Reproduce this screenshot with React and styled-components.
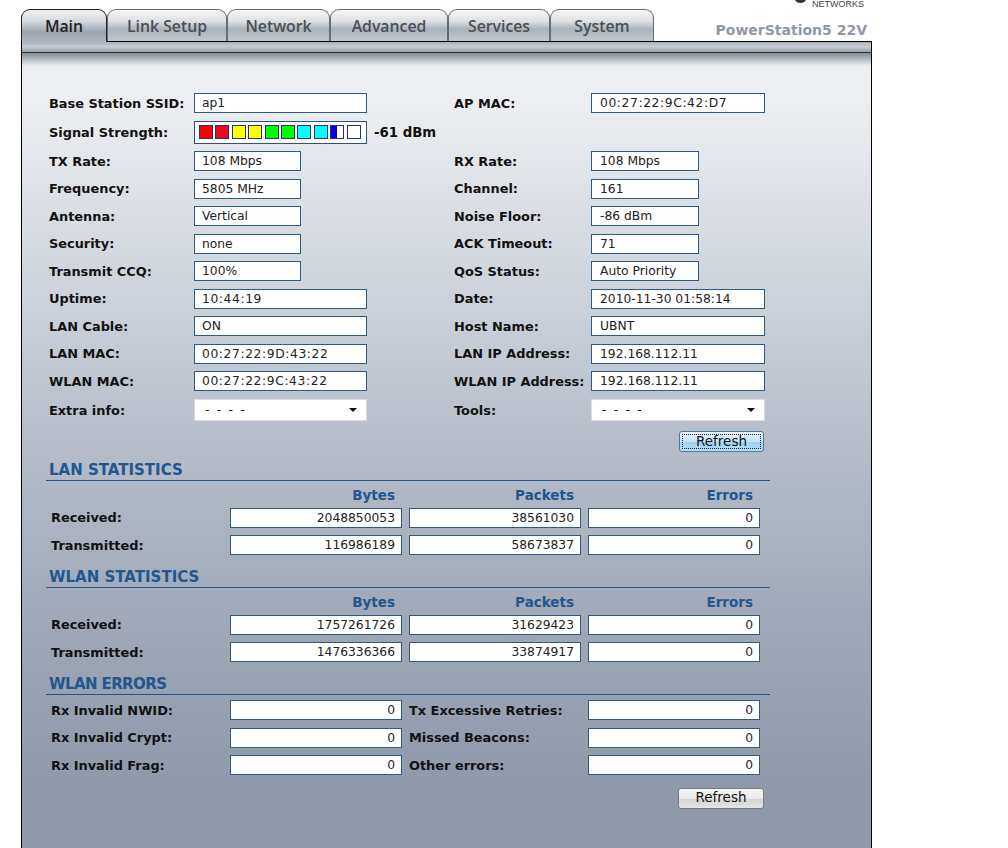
import React from "react";
import styled, { createGlobalStyle } from "styled-components";

const GlobalStyle = createGlobalStyle`
    html, body {
        margin: 0;
        padding: 0;
        height: 848px;
        overflow: hidden;
        background: #fff;
    }
`;

const Page = styled.div`
    position: relative;
    width: 851px;
    height: 848px;
    margin-left: 21px;
    font-family: "DejaVu Sans", Verdana, sans-serif;
    font-size: 12.3px;
    color: #111;
    overflow: hidden;
`;

const Logo = styled.div`
    position: absolute;
    top: -1px;
    right: 8px;
    display: flex;
    gap: 6px;
`;

const LogoMark = styled.svg`
    width: 11px;
    height: 3px;
    margin-top: 1px;
`;

const LogoText = styled.span`
    font-family: "Liberation Sans", Arial, sans-serif;
    font-size: 9px;
    line-height: 11px;
    color: #444;
`;

const Header = styled.div`
    display: flex;
    align-items: flex-end;
    height: 41px;
    padding-top: 9px;
    box-sizing: border-box;
`;

const Tab = styled.div`
    box-sizing: border-box;
    width: ${({ $w }) => $w}px;
    height: ${({ $active }) => ($active ? 33 : 32)}px;
    margin-bottom: ${({ $active }) => ($active ? -1 : 0)}px;
    border: 1px solid ${({ $active }) => ($active ? "#222" : "#666c72")};
    border-bottom: none;
    border-radius: 9px 9px 0 0;
    background: ${({ $active }) =>
        $active
            ? "linear-gradient(#f2f3f5 0%, #d5d9de 35%, #9aa3ae 70%, #aeb6c0 100%)"
            : "linear-gradient(#f4f5f6 0%, #dfe2e5 35%, #aab2bb 62%, #c3c9cf 100%)"};
    text-align: center;
    font-family: "Open Sans", "Trebuchet MS", sans-serif;
    font-size: 15.8px;
    font-weight: 600;
    line-height: 32px;
    white-space: nowrap;
    color: ${({ $active }) => ($active ? "#222" : "#4a4f54")};
    position: relative;
    z-index: ${({ $active }) => ($active ? 2 : 1)};
`;

const Model = styled.div`
    margin-left: auto;
    margin-right: 5px;
    margin-bottom: 3px;
    font-size: 14px;
    font-weight: 700;
    color: #8f98a5;
`;

const Panel = styled.div`
    box-sizing: border-box;
    height: 807px;
    border: 1px solid #000;
    border-bottom: none;
    background: linear-gradient(#eceef1 60px, #bcc3ce 360px, #a2aab9 560px, #8f99aa 745px);
`;

const Strip = styled.div`
    height: 10px;
    background: linear-gradient(#aab2bc, #c6ccd3 45%, #9ba3ad);
    border-bottom: 1px solid #2c3034;
`;

const StripShadow = styled.div`
    height: 13px;
    background: linear-gradient(#868c93, #eceef1);
`;

const Content = styled.div`
    padding: 23.5px 0 0 24px;
    width: 724px;
`;

const InfoGrid = styled.div`
    display: grid;
    grid-template-columns: 405px 1fr;
    grid-template-rows: 27.5px 30.5px repeat(9, 27.5px) 30.5px;
    margin-left: 3px;
`;

const InfoCell = styled.div`
    display: flex;
    align-items: center;
`;

const Label = styled.div`
    width: ${({ $w }) => $w}px;
    flex: none;
    font-size: 12.9px;
    font-weight: 700;
    white-space: nowrap;
`;

const Field = styled.div`
    box-sizing: border-box;
    width: ${({ $w }) => $w}px;
    height: 20px;
    flex: none;
    padding: 0 6px 0 ${({ $pad }) => $pad || 7}px;
    border: 1px solid #2d5a86;
    background: #fff;
    color: #222;
    line-height: 19px;
    letter-spacing: ${({ $mac }) => ($mac ? 0.6 : 0)}px;
    text-align: ${({ $right }) => ($right ? "right" : "left")};
    white-space: nowrap;
    overflow: hidden;
`;

const SignalBox = styled.div`
    box-sizing: border-box;
    width: 173px;
    height: 23px;
    flex: none;
    display: flex;
    align-items: center;
    gap: 2.4px;
    padding-left: 4px;
    border: 1px solid #2d4f86;
    background: #fff;
`;

const SignalCell = styled.div`
    box-sizing: border-box;
    width: 14px;
    height: 14px;
    border: 1px solid #2b2b80;
    background: ${({ $color }) => $color};
`;

const SignalValue = styled.div`
    margin-left: 7px;
    font-size: 13.3px;
    font-weight: 700;
`;

const SelectBox = styled.div`
    box-sizing: border-box;
    width: ${({ $w }) => $w}px;
    height: 22px;
    flex: none;
    display: flex;
    align-items: center;
    justify-content: space-between;
    padding: 0 9px 0 10px;
    border: 1px solid #d8dce2;
    background: #fff;
    letter-spacing: 1.7px;
`;

const Caret = styled.span`
    width: 0;
    height: 0;
    border-left: 4px solid transparent;
    border-right: 4px solid transparent;
    border-top: 4px solid #111;
`;

const ButtonRow = styled.div`
    display: flex;
    justify-content: flex-end;
    margin-top: ${({ $top }) => $top}px;
    padding-right: 6px;
`;

const Button = styled.button`
    box-sizing: border-box;
    width: ${({ $focused }) => ($focused ? 85 : 86)}px;
    height: 21px;
    padding: 0 0 2px;
    border: 1px solid ${({ $focused }) => ($focused ? "#3f7f9f" : "#777c80")};
    border-radius: 3px;
    background: ${({ $focused }) =>
        $focused
            ? "linear-gradient(#eaf6fc 0%, #c4e4f6 50%, #9fd2ee 55%, #b9e0f4 100%)"
            : "linear-gradient(#f6f6f6 0%, #ebebeb 50%, #d6d6d6 55%, #e4e4e4 100%)"};
    outline: ${({ $focused }) => ($focused ? "1px dotted #222" : "none")};
    outline-offset: -4px;
    font-family: "DejaVu Sans", Verdana, sans-serif;
    font-size: 13.5px;
    color: #111;
`;

const SectionTitle = styled.div`
    margin-top: ${({ $top }) => $top}px;
    padding: 0 0 2px 3px;
    height: 16px;
    border-bottom: 1px solid #22568f;
    font-size: 15px;
    font-weight: 700;
    line-height: 16px;
    letter-spacing: ${({ $tight }) => ($tight ? -0.6 : 0)}px;
    color: #22568f;
`;

const StatHead = styled.div`
    display: grid;
    grid-template-columns: repeat(4, 172px);
    column-gap: 7px;
    height: 23px;
    padding-left: 5px;
`;

const StatHeadCell = styled.div`
    font-size: 13.5px;
    font-weight: 700;
    line-height: 29px;
    text-align: right;
    padding-right: 7px;
    color: #22568f;
`;

const StatRow = styled.div`
    display: grid;
    grid-template-columns: repeat(4, 172px);
    column-gap: 7px;
    align-items: center;
    height: 27.5px;
    padding-left: 5px;
`;

const ErrorList = styled.div`
    margin-top: 1.25px;
`;

const StatLabel = styled.div`
    font-size: 12.9px;
    font-weight: 700;
    white-space: nowrap;
`;

const tabs = [
    ["Main", 86],
    ["Link Setup", 120],
    ["Network", 103],
    ["Advanced", 118],
    ["Services", 102],
    ["System", 104],
];

const signal = [
    "#ff0000", "#ee0a1e", "#ffff00", "#ffff00", "#00ff00", "#00ff00",
    "#00ffff", "#00ffff", "linear-gradient(90deg, #0000e0 50%, #fff 50%)", "#fff",
];

const info = [
    ["TX Rate:", "108 Mbps", 107, "RX Rate:", "108 Mbps", 108],
    ["Frequency:", "5805 MHz", 107, "Channel:", "161", 108],
    ["Antenna:", "Vertical", 107, "Noise Floor:", "-86 dBm", 108],
    ["Security:", "none", 107, "ACK Timeout:", "71", 108],
    ["Transmit CCQ:", "100%", 107, "QoS Status:", "Auto Priority", 108],
    ["Uptime:", "10:44:19", 173, "Date:", "2010-11-30 01:58:14", 174],
    ["LAN Cable:", "ON", 173, "Host Name:", "UBNT", 174],
    ["LAN MAC:", "00:27:22:9D:43:22", 173, "LAN IP Address:", "192.168.112.11", 174],
    ["WLAN MAC:", "00:27:22:9C:43:22", 173, "WLAN IP Address:", "192.168.112.11", 174],
];

const errors = [
    ["Rx Invalid NWID:", "Tx Excessive Retries:"],
    ["Rx Invalid Crypt:", "Missed Beacons:"],
    ["Rx Invalid Frag:", "Other errors:"],
];

const isMac = (text) => text.split(":").length > 2;

const Stats = ({ rows }) => (
    <>
        <StatHead>
            <div />
            <StatHeadCell>Bytes</StatHeadCell>
            <StatHeadCell>Packets</StatHeadCell>
            <StatHeadCell>Errors</StatHeadCell>
        </StatHead>
        {rows.map((r) => (
            <StatRow key={r[0]}>
                <StatLabel>{r[0]}</StatLabel>
                <Field $w={172} $right>{r[1]}</Field>
                <Field $w={172} $right>{r[2]}</Field>
                <Field $w={172} $right>{r[3]}</Field>
            </StatRow>
        ))}
    </>
);

const App = () => (
    <Page>
        <GlobalStyle />
        <Logo>
            <LogoMark viewBox="0 0 11 3">
                <path d="M0 0 C1 2 3 3 5.5 3 C8 3 10 2 11 0 Z" fill="#333" />
            </LogoMark>
            <LogoText>NETWORKS</LogoText>
        </Logo>
        <Header>
            {tabs.map(([name, w], i) => (
                <Tab key={name} $w={w} $active={i === 0}>{name}</Tab>
            ))}
            <Model>PowerStation5 22V</Model>
        </Header>
        <Panel>
            <Strip />
            <StripShadow />
            <Content>
                <InfoGrid>
                    <InfoCell>
                        <Label $w={145}>Base Station SSID:</Label>
                        <Field $w={173}>ap1</Field>
                    </InfoCell>
                    <InfoCell>
                        <Label $w={137}>AP MAC:</Label>
                        <Field $w={174} $pad={8} $mac>00:27:22:9C:42:D7</Field>
                    </InfoCell>
                    <InfoCell>
                        <Label $w={145}>Signal Strength:</Label>
                        <SignalBox>
                            {signal.map((c, i) => <SignalCell key={i} $color={c} />)}
                        </SignalBox>
                        <SignalValue>-61 dBm</SignalValue>
                    </InfoCell>
                    <InfoCell />
                    {info.map((r) => (
                        <React.Fragment key={r[0]}>
                            <InfoCell>
                                <Label $w={145}>{r[0]}</Label>
                                <Field $w={r[2]} $mac={isMac(r[1])}>{r[1]}</Field>
                            </InfoCell>
                            <InfoCell>
                                <Label $w={137}>{r[3]}</Label>
                                <Field $w={r[5]} $pad={8}>{r[4]}</Field>
                            </InfoCell>
                        </React.Fragment>
                    ))}
                    <InfoCell>
                        <Label $w={145}>Extra info:</Label>
                        <SelectBox $w={173}>- - - -<Caret /></SelectBox>
                    </InfoCell>
                    <InfoCell>
                        <Label $w={137}>Tools:</Label>
                        <SelectBox $w={174}>- - - -<Caret /></SelectBox>
                    </InfoCell>
                </InfoGrid>
                <ButtonRow $top={5.75}>
                    <Button $focused>Refresh</Button>
                </ButtonRow>

                <SectionTitle $top={9.75}>LAN STATISTICS</SectionTitle>
                <Stats rows={[
                    ["Received:", "2048850053", "38561030", "0"],
                    ["Transmitted:", "116986189", "58673837", "0"],
                ]} />

                <SectionTitle $top={10}>WLAN STATISTICS</SectionTitle>
                <Stats rows={[
                    ["Received:", "1757261726", "31629423", "0"],
                    ["Transmitted:", "1476336366", "33874917", "0"],
                ]} />

                <SectionTitle $top={10} $tight>WLAN ERRORS</SectionTitle>
                <ErrorList>
                    {errors.map(([left, right]) => (
                        <StatRow key={left}>
                            <StatLabel>{left}</StatLabel>
                            <Field $w={172} $right>0</Field>
                            <StatLabel>{right}</StatLabel>
                            <Field $w={172} $right>0</Field>
                        </StatRow>
                    ))}
                </ErrorList>
                <ButtonRow $top={9}>
                    <Button>Refresh</Button>
                </ButtonRow>
            </Content>
        </Panel>
    </Page>
);

export default App;
